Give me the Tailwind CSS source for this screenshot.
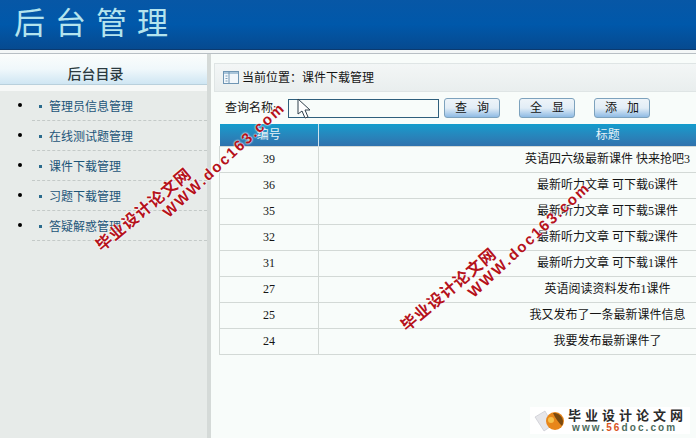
<!DOCTYPE html>
<html lang="zh">
<head>
<meta charset="utf-8">
<script src="https://cdn.jsdelivr.net/npm/@tailwindcss/browser@4"></script>
</head>
<body class="relative w-[696px] h-[438px] overflow-hidden bg-[#f8fcfa] text-[12px] text-[#151515] font-['Liberation_Serif','Noto_Sans_CJK_SC',serif]">
<header class="h-[50px] flex items-center pl-[14px] pb-[2px] bg-gradient-to-b from-[#0757a6] via-[#0058aa] to-[#064a90] border-b border-[#0b3a70]">
  <h1 class="text-[31px] leading-none tracking-[10px] text-[#b4e4ee] font-normal">后台管理</h1>
</header>
<div class="h-[4px] bg-[#f4f7f7] border-b border-[#b8bfc4]"></div>
<main class="flex h-[384px]">
  <aside class="w-[207px] bg-[#e7ebe9]">
    <div class="h-[37px] bg-[#f6f8f7]">
      <div class="h-[31px] flex items-end justify-center pr-[16px] pb-[1px] text-[14px] leading-[16px] font-medium text-[#2b3a40] bg-gradient-to-b from-[#fbfdfc] via-[#f0f8fb] to-[#cfe6f3] border-b border-[#b9d0dc]">后台目录</div>
    </div>
    <ul class="ml-[32px] list-disc text-[#1c5478]">
      <li class="h-[30px] border-b border-dashed border-[#c4cac8] marker:text-black"><a class="flex items-center gap-[7px] h-[29px] pt-[2px] pl-[7px]"><span class="size-[3px] bg-[#2a6a8c]"></span>管理员信息管理</a></li>
      <li class="h-[30px] border-b border-dashed border-[#c4cac8] marker:text-black"><a class="flex items-center gap-[7px] h-[29px] pt-[2px] pl-[7px]"><span class="size-[3px] bg-[#2a6a8c]"></span>在线测试题管理</a></li>
      <li class="h-[30px] border-b border-dashed border-[#c4cac8] marker:text-black"><a class="flex items-center gap-[7px] h-[29px] pt-[2px] pl-[7px]"><span class="size-[3px] bg-[#2a6a8c]"></span>课件下载管理</a></li>
      <li class="h-[30px] border-b border-dashed border-[#c4cac8] marker:text-black"><a class="flex items-center gap-[7px] h-[29px] pt-[2px] pl-[7px]"><span class="size-[3px] bg-[#2a6a8c]"></span>习题下载管理</a></li>
      <li class="h-[30px] border-b border-dashed border-[#c4cac8] marker:text-black"><a class="flex items-center gap-[7px] h-[29px] pt-[2px] pl-[7px]"><span class="size-[3px] bg-[#2a6a8c]"></span>答疑解惑管理</a></li>
    </ul>
  </aside>
  <div class="w-[4px] bg-[#d5dad8]"></div>
  <section class="w-[485px] pl-[3px] pt-[9px]">
    <div class="w-[600px] h-[29px] flex items-center pl-[8px] gap-[3px] bg-gradient-to-b from-[#f3f6f6] to-[#e9eeee] border border-[#dfe5e5]">
      <svg width="16" height="13" viewBox="0 0 16 13" fill="none"><rect x=".5" y=".5" width="15" height="12" fill="#f2f7fb" stroke="#6f96b4"/><rect x="1" y="1" width="14" height="2" fill="#a9c5da"/><path d="M6 1v11" stroke="#6f96b4"/><path d="M2.500 5h2M2.500 7.500h2M2.500 10h2" stroke="#7d9fb9"/></svg>
      <span>当前位置：课件下载管理</span>
    </div>
    <form class="h-[32px] flex items-center pl-[11px]">
      <label class="w-[63px]">查询名称:</label>
      <input class="w-[151px] h-[19px] border border-[#2f5f7c] bg-[#f8fcfa]" type="text">
      <button type="button" class="ml-[5px] w-[56px] h-[20px] rounded-[3px] border border-[#7da2bd] bg-gradient-to-b from-[#eef4f9] via-[#e2edf6] to-[#8fbbe4] tracking-[10px] pl-[10px] leading-none">查询</button>
      <button type="button" class="ml-[19px] w-[56px] h-[20px] rounded-[3px] border border-[#7da2bd] bg-gradient-to-b from-[#eef4f9] via-[#e2edf6] to-[#8fbbe4] tracking-[10px] pl-[10px] leading-none">全显</button>
      <button type="button" class="ml-[19px] w-[56px] h-[20px] rounded-[3px] border border-[#7da2bd] bg-gradient-to-b from-[#eef4f9] via-[#e2edf6] to-[#8fbbe4] tracking-[10px] pl-[10px] leading-none">添加</button>
    </form>
    <table class="ml-[5px] w-[678px] table-fixed border-collapse text-center">
      <thead>
        <tr class="h-[22px] text-[#e6f3f8] bg-gradient-to-b from-[#119ccd] to-[#2f72ad]">
          <th class="w-[99px] font-normal border-r border-[#cfe3ee]">编号</th>
          <th class="font-normal">标题</th>
        </tr>
      </thead>
      <tbody>
        <tr class="h-[26px] border border-[#d3d9d6]"><td class="border-r border-[#d3d9d6]">39</td><td>英语四六级最新课件 快来抢吧3</td></tr>
        <tr class="h-[26px] border border-[#d3d9d6]"><td class="border-r border-[#d3d9d6]">36</td><td>最新听力文章 可下载6课件</td></tr>
        <tr class="h-[26px] border border-[#d3d9d6]"><td class="border-r border-[#d3d9d6]">35</td><td>最新听力文章 可下载5课件</td></tr>
        <tr class="h-[26px] border border-[#d3d9d6]"><td class="border-r border-[#d3d9d6]">32</td><td>最新听力文章 可下载2课件</td></tr>
        <tr class="h-[26px] border border-[#d3d9d6]"><td class="border-r border-[#d3d9d6]">31</td><td>最新听力文章 可下载1课件</td></tr>
        <tr class="h-[26px] border border-[#d3d9d6]"><td class="border-r border-[#d3d9d6]">27</td><td>英语阅读资料发布1课件</td></tr>
        <tr class="h-[26px] border border-[#d3d9d6]"><td class="border-r border-[#d3d9d6]">25</td><td>我又发布了一条最新课件信息</td></tr>
        <tr class="h-[26px] border border-[#d3d9d6]"><td class="border-r border-[#d3d9d6]">24</td><td>我要发布最新课件了</td></tr>
      </tbody>
    </table>
  </section>
</main>

<svg class="absolute left-[297px] top-[98px]" width="14" height="21" viewBox="0 0 14 21"><path d="M1 1v15l4-3 3 7 3-1-3-7h5z" fill="#fff" stroke="#30404c" stroke-width="1"/></svg>

<div class="absolute left-[78px] top-[164px] w-[230px] rotate-[-40deg] leading-none font-bold text-[#b5121b] [text-shadow:0_0_2px_#fff,0_0_2px_#fff] font-['Liberation_Sans','Noto_Sans_CJK_SC',sans-serif]">
  <div class="text-[16px] tracking-[1px]">毕业设计论文网</div>
  <div class="mt-[5px] pl-[73px] text-[15px] tracking-[2px] whitespace-nowrap origin-left rotate-[-3deg]">WWW.doc163.com</div>
</div>
<div class="absolute left-[383px] top-[244px] w-[230px] rotate-[-40deg] leading-none font-bold text-[#b5121b] [text-shadow:0_0_2px_#fff,0_0_2px_#fff] font-['Liberation_Sans','Noto_Sans_CJK_SC',sans-serif]">
  <div class="text-[16px] tracking-[1px]">毕业设计论文网</div>
  <div class="mt-[5px] pl-[73px] text-[15px] tracking-[2px] whitespace-nowrap origin-left rotate-[-3deg]">WWW.doc163.com</div>
</div>

<div class="absolute left-[530px] top-[407px] w-[160px] h-[27px] bg-white flex items-center font-['Liberation_Sans','Noto_Sans_CJK_SC',sans-serif]">
  <svg class="ml-[2px] shrink-0" width="34" height="26" viewBox="0 0 34 26"><path d="M3 9l10-6 8 14-9 6z" fill="#e6e6ea" stroke="#b9b9c2" stroke-width=".5"/><circle cx="23" cy="13" r="9" fill="#e8861a"/><path d="M21 5a9 9 0 0 1 9 13c-3-3-7-8-9-13z" fill="#7a4a10"/><circle cx="19" cy="12" r="3" fill="#f6c04a"/></svg>
  <div class="ml-[2px] leading-none">
    <div class="text-[13px] tracking-[4px] font-bold text-[#2b2b2b] whitespace-nowrap">毕业设计论文网</div>
    <div class="mt-[1px] ml-[4px] text-[10px] tracking-[2.100px] font-bold text-[#4c6b5c] whitespace-nowrap">www.<span class="text-[#d9541e]">56</span>doc.com</div>
  </div>
</div>
</body>
</html>
